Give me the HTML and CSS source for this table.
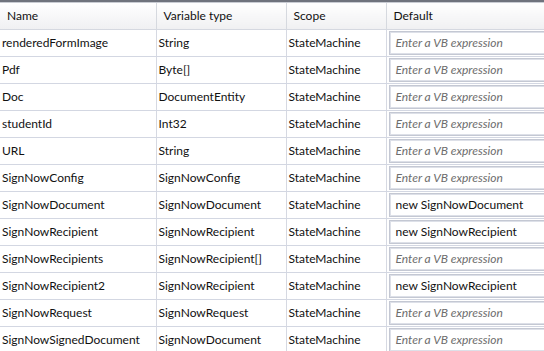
FILE: index.html
```html
<!DOCTYPE html>
<html lang="en">
<head>
  <meta charset="UTF-8">
  <title>Variables</title>
  <link rel="stylesheet" href="styles.css">
</head>
<body>
  <div class="topbar"></div>
  <table class="vars">
    <thead>
      <tr>
        <th class="col-name">Name</th>
        <th class="col-type">Variable type</th>
        <th class="col-scope">Scope</th>
        <th class="col-default">Default</th>
      </tr>
    </thead>
    <tbody>
      <tr><td>renderedFormImage</td><td>String</td><td>StateMachine</td><td><div class="expr empty">Enter a VB expression</div></td></tr>
      <tr><td>Pdf</td><td>Byte[]</td><td>StateMachine</td><td><div class="expr empty">Enter a VB expression</div></td></tr>
      <tr><td>Doc</td><td>DocumentEntity</td><td>StateMachine</td><td><div class="expr empty">Enter a VB expression</div></td></tr>
      <tr><td>studentId</td><td>Int32</td><td>StateMachine</td><td><div class="expr empty">Enter a VB expression</div></td></tr>
      <tr><td>URL</td><td>String</td><td>StateMachine</td><td><div class="expr empty">Enter a VB expression</div></td></tr>
      <tr><td>SignNowConfig</td><td>SignNowConfig</td><td>StateMachine</td><td><div class="expr empty">Enter a VB expression</div></td></tr>
      <tr><td>SignNowDocument</td><td>SignNowDocument</td><td>StateMachine</td><td><div class="expr">new SignNowDocument</div></td></tr>
      <tr><td>SignNowRecipient</td><td>SignNowRecipient</td><td>StateMachine</td><td><div class="expr">new SignNowRecipient</div></td></tr>
      <tr><td>SignNowRecipients</td><td>SignNowRecipient[]</td><td>StateMachine</td><td><div class="expr empty">Enter a VB expression</div></td></tr>
      <tr><td>SignNowRecipient2</td><td>SignNowRecipient</td><td>StateMachine</td><td><div class="expr">new SignNowRecipient</div></td></tr>
      <tr><td>SignNowRequest</td><td>SignNowRequest</td><td>StateMachine</td><td><div class="expr empty">Enter a VB expression</div></td></tr>
      <tr><td>SignNowSignedDocument</td><td>SignNowDocument</td><td>StateMachine</td><td><div class="expr empty">Enter a VB expression</div></td></tr>
    </tbody>
  </table>
</body>
</html>
```

FILE: styles.css
```css
/* Global reset */
* {
  margin: 0;
  padding: 0;
  box-sizing: border-box;
}

body {
  background-color: #ffffff;
  color: #111111;
  font-family: 'Lato', 'Open Sans', sans-serif;
  font-size: 12px;
  overflow: hidden;
}

.topbar {
  height: 3px;
  background-color: #6f737d;
  border-bottom: 1px solid #c9ccd3;
}

.vars {
  border-collapse: collapse;
  table-layout: fixed;
  width: 560px;
}

.vars th {
  height: 26px;
  text-align: left;
  font-weight: 400;
  padding: 0 0 0 7px;
  background: linear-gradient(to bottom, #ffffff, #f0f0f2);
  border-right: 1px solid #d6d9df;
  border-bottom: 1px solid #d5d8e0;
}

.col-name { width: 156px; }
.col-type { width: 130px; }
.col-scope { width: 100px; }

.vars td {
  height: 27px;
  padding: 0 0 0 2px;
  border-right: 1px solid #d6d9e2;
  border-bottom: 1px solid #d3d7e2;
  white-space: nowrap;
  overflow: hidden;
}

.vars td:last-child {
  padding: 1px 0 1px 2px;
}

.expr {
  height: 24px;
  line-height: 20px;
  padding-left: 5px;
  border: 2px solid #dde0e8;
  outline: 1px solid #c4c8d3;
  outline-offset: -1px;
  background-color: #ffffff;
}

.expr.empty {
  color: #6d6d6d;
  font-style: italic;
}
```
